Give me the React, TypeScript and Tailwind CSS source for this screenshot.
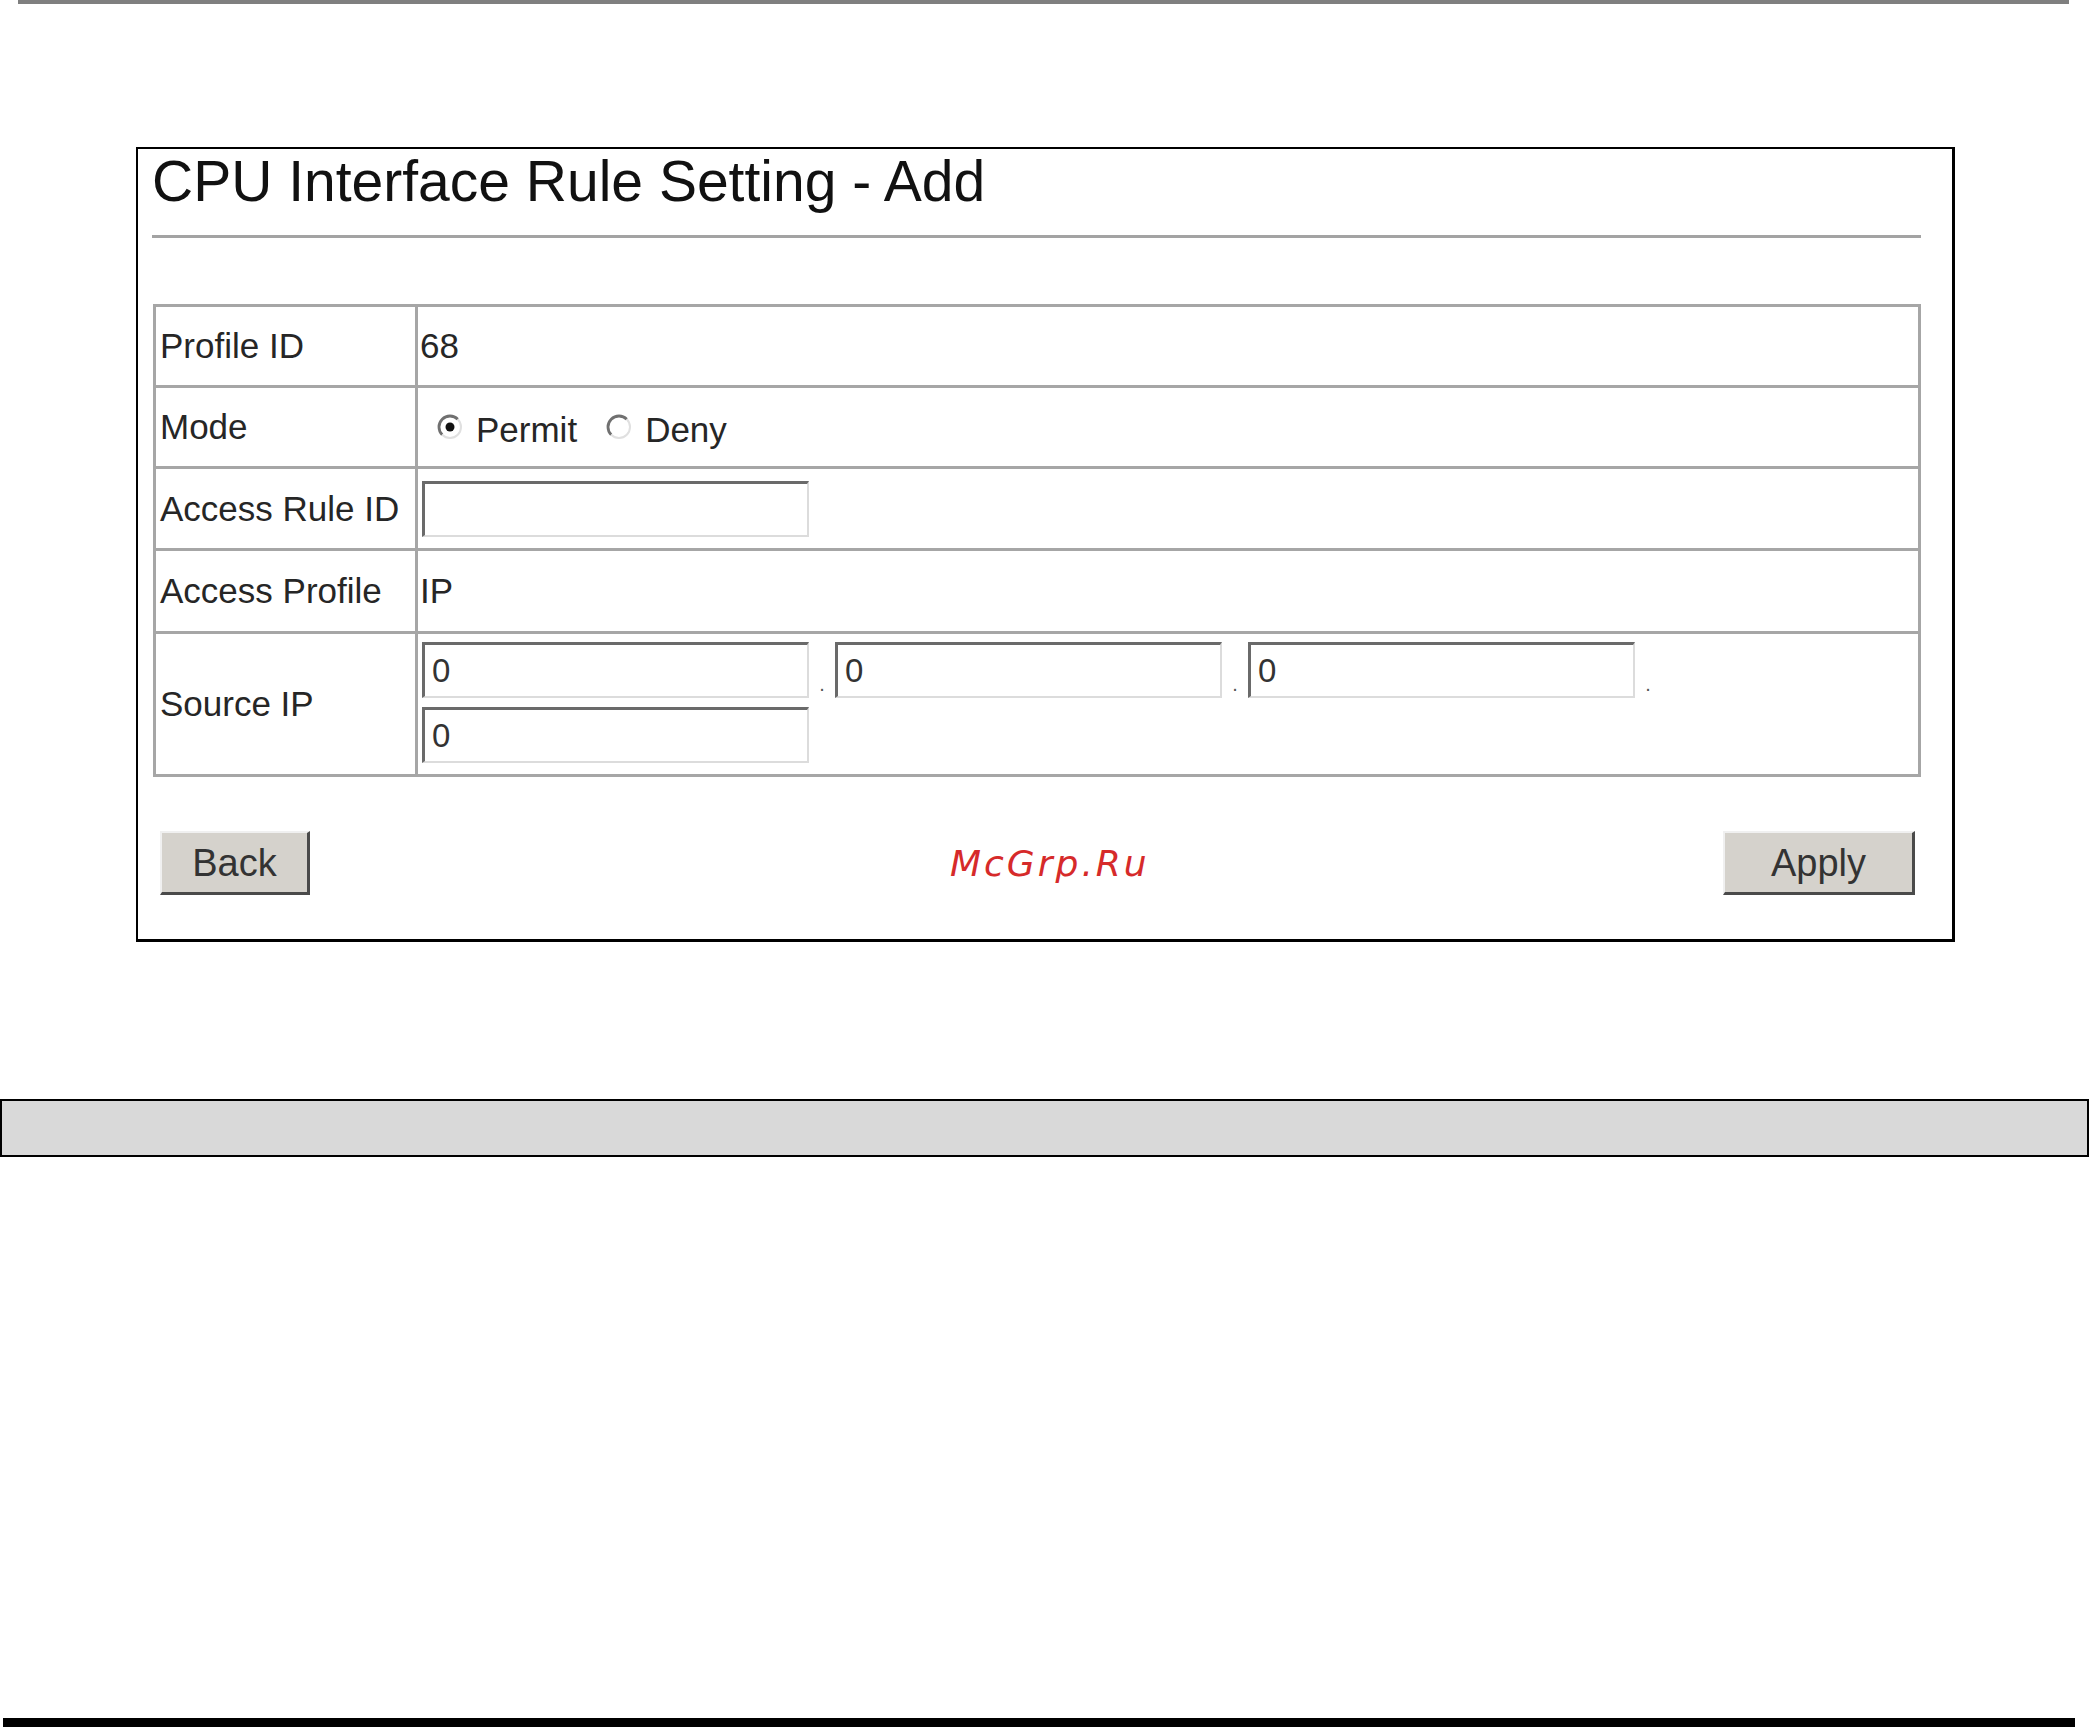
const rows = [
  { label: 'Profile ID', h: 'h-[81px]' },
  { label: 'Mode', h: 'h-[81px]' },
  { label: 'Access Rule ID', h: 'h-[82px]' },
  { label: 'Access Profile', h: 'h-[83px]' },
];

function Radio({ checked }: { checked?: boolean }) {
  return (
    <svg width="26" height="26" viewBox="0 0 26 26" className="shrink-0">
      <circle cx="13" cy="13" r="11" fill="#fff" />
      <path d="M20.78 5.22 A11 11 0 0 0 5.22 20.78" fill="none" stroke="#707070" strokeWidth="2.8" />
      <path d="M5.22 20.78 A11 11 0 0 0 20.78 5.22" fill="none" stroke="#e0e0e0" strokeWidth="2" />
      {checked && <circle cx="13" cy="13" r="4.5" fill="#111" />}
    </svg>
  );
}

function TextInput({ value = '' }: { value?: string }) {
  return (
    <input
      readOnly
      value={value}
      className="w-[387px] h-[56px] shrink-0 bg-white border-t-[3px] border-l-[3px] border-r-2 border-b-2 border-t-[#6a6a6a] border-l-[#6a6a6a] border-r-[#dcdcdc] border-b-[#dcdcdc] pl-[7px] text-[33px] leading-none text-[#333] outline-none font-['Liberation_Sans',Arial,sans-serif]"
    />
  );
}

function Dot() {
  return <span className="w-[26px] shrink-0 self-end mb-[4px] text-center text-[20px] leading-none text-[#555]">.</span>;
}

function Button({ label, width }: { label: string; width: string }) {
  return (
    <button
      className={`${width} h-[64px] bg-[#d5d2cc] border-t-2 border-l-2 border-t-[#f0f0f0] border-l-[#f0f0f0] border-r-[3px] border-b-[3px] border-r-[#4a4a4a] border-b-[#4a4a4a] text-[38px] leading-none text-[#333] flex items-center justify-center font-['Liberation_Sans',Arial,sans-serif]`}
    >
      {label}
    </button>
  );
}

function Value({ label }: { label: string }) {
  if (label === 'Profile ID') return <span className="pl-[2px]">68</span>;
  if (label === 'Access Profile') return <span className="pl-[2px]">IP</span>;
  if (label === 'Access Rule ID') return <div className="pl-[4px]"><TextInput /></div>;
  return (
    <div className="flex items-center pl-[19px]">
      <Radio checked />
      <span className="ml-[13px] mt-[6px]">Permit</span>
      <span className="ml-[29px]"><Radio /></span>
      <span className="ml-[13px] mt-[6px]">Deny</span>
    </div>
  );
}

export default function App() {
  return (
    <div className="w-[2089px] h-[1727px] bg-white overflow-hidden font-['Liberation_Sans',Arial,sans-serif]">
      <div className="ml-[18px] w-[2051px] h-[4px] bg-[#7f7f7f]" />

      <div className="relative ml-[136px] mt-[143px] w-[1819px] h-[795px] border-t-2 border-l-2 border-r-[3px] border-b-[3px] border-black pl-[14px] pt-[4px]">
        <h1 className="text-[57px] leading-[56px] text-[#111]">CPU Interface Rule Setting - Add</h1>
        <div className="mt-[26px] w-[1769px] h-[3px] bg-[#a3a3a3]" />

        <div className="mt-[66px] ml-[1px] w-[1768px] border-[3px] border-[#a6a6a6] text-[35px] leading-[34px] text-[#262626]">
          {rows.map((row) => (
            <div key={row.label} className={`flex ${row.h} border-b-[3px] border-[#a6a6a6]`}>
              <div className="w-[262px] shrink-0 border-r-[3px] border-[#a6a6a6] flex items-center pl-[4px]">
                {row.label}
              </div>
              <div className="flex-1 flex items-center">
                <Value label={row.label} />
              </div>
            </div>
          ))}
          <div className="flex h-[140px]">
            <div className="w-[262px] shrink-0 border-r-[3px] border-[#a6a6a6] flex items-center pl-[4px]">
              Source IP
            </div>
            <div className="flex-1 flex flex-col gap-[9px] pt-[8px] pl-[4px]">
              <div className="flex">
                <TextInput value="0" />
                <Dot />
                <TextInput value="0" />
                <Dot />
                <TextInput value="0" />
                <Dot />
              </div>
              <div className="flex">
                <TextInput value="0" />
              </div>
            </div>
          </div>
        </div>

        <div className="mt-[54px] ml-[1px] w-[1768px] flex justify-between pl-[7px] pr-[6px]">
          <Button label="Back" width="w-[150px]" />
          <Button label="Apply" width="w-[192px]" />
        </div>

        <span className="absolute left-[812px] top-[697px] text-[36px] leading-[36px] italic tracking-[3px] text-[#d62a2a] font-['DejaVu_Sans',sans-serif]">
          McGrp.Ru
        </span>
      </div>

      <div className="mt-[157px] w-full h-[58px] border-2 border-black bg-[#d9d9d9]" />

      <div className="mt-[561px] ml-[3px] w-[2072px] h-[9px] bg-black" />
    </div>
  );
}
